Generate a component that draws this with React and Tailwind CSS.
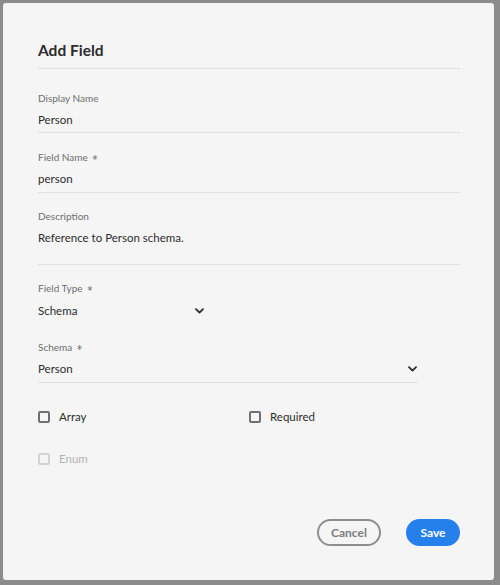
import React from "react";

const font = { fontFamily: "Lato, 'Open Sans', sans-serif" };

function Chevron() {
  return (
    <svg width="9" height="6" viewBox="0 0 9 6" className="shrink-0">
      <path d="M1 1.2 L4.5 4.6 L8 1.2" fill="none" stroke="#2c2c2c" strokeWidth="1.8" strokeLinecap="round" strokeLinejoin="round" />
    </svg>
  );
}

function Req() {
  return <span className="ml-[4px] text-[15px] leading-[14px] text-[#6e6e6e] relative top-[3px]">*</span>;
}

function Label({ children, req }) {
  return (
    <div className="h-[14px] flex items-center text-[10px] leading-[14px] text-[#6e6e6e]">
      {children}
      {req && <Req />}
    </div>
  );
}

function Value({ children }) {
  return <div className="h-[18px] leading-[18px] text-[11.5px] text-[#2c2c2c]">{children}</div>;
}

function Checkbox({ label, disabled }) {
  return (
    <div className="flex items-center h-[18px]">
      <div
        className={
          disabled
            ? "w-[12px] h-[12px] rounded-[2px] border-2 border-[#d3d3d3]"
            : "w-[12px] h-[12px] rounded-[2px] border-2 border-[#707070]"
        }
      />
      <span className={disabled ? "ml-[9px] text-[11.5px] text-[#b3b3b3]" : "ml-[9px] text-[11.5px] text-[#2c2c2c]"}>
        {label}
      </span>
    </div>
  );
}

export default function App() {
  return (
    <div className="w-[500px] h-[585px] bg-[#8c8c8c] pt-[3px] pl-[3px]" style={font}>
      <div className="w-[491px] h-[577px] bg-[#f5f5f5] rounded-[3px] pl-[35px] pr-[34px] flex flex-col">
        <div className="pt-[36px] pb-[7px] border-b border-[#e1e1e1]">
          <div className="h-[22px] leading-[22px] text-[15.5px] font-bold text-[#2c2c2c]">Add Field</div>
        </div>

        <div className="mt-[22px] pb-[3px] border-b border-[#e1e1e1]">
          <Label>Display Name</Label>
          <div className="mt-[6px]">
            <Value>Person</Value>
          </div>
        </div>

        <div className="mt-[17px] pb-[4px] border-b border-[#e1e1e1]">
          <Label req>Field Name</Label>
          <div className="mt-[6px]">
            <Value>person</Value>
          </div>
        </div>

        <div className="mt-[16px] pb-[17px] border-b border-[#e1e1e1]">
          <Label>Description</Label>
          <div className="mt-[6px]">
            <Value>Reference to Person schema.</Value>
          </div>
        </div>

        <div className="mt-[16px]">
          <Label req>Field Type</Label>
          <div className="mt-[7px] w-[166px] flex items-center justify-between">
            <Value>Schema</Value>
            <Chevron />
          </div>
        </div>

        <div className="mt-[20px] w-[380px] pb-[4px] border-b border-[#e1e1e1]">
          <Label req>Schema</Label>
          <div className="mt-[6px] flex items-center justify-between pr-[1px]">
            <Value>Person</Value>
            <Chevron />
          </div>
        </div>

        <div className="mt-[25px] grid grid-cols-2">
          <Checkbox label="Array" />
          <Checkbox label="Required" />
        </div>
        <div className="mt-[24px]">
          <Checkbox label="Enum" disabled />
        </div>

        <div className="mt-auto pb-[34px] flex justify-end gap-[25px]">
          <button className="w-[64px] h-[27px] rounded-full border-2 border-[#8e8e8e] text-[12px] font-bold text-[#7b7b7b] flex items-center justify-center">
            Cancel
          </button>
          <button className="w-[54px] h-[27px] rounded-full bg-[#2680eb] text-[12px] font-bold text-white flex items-center justify-center">
            Save
          </button>
        </div>
      </div>
    </div>
  );
}
